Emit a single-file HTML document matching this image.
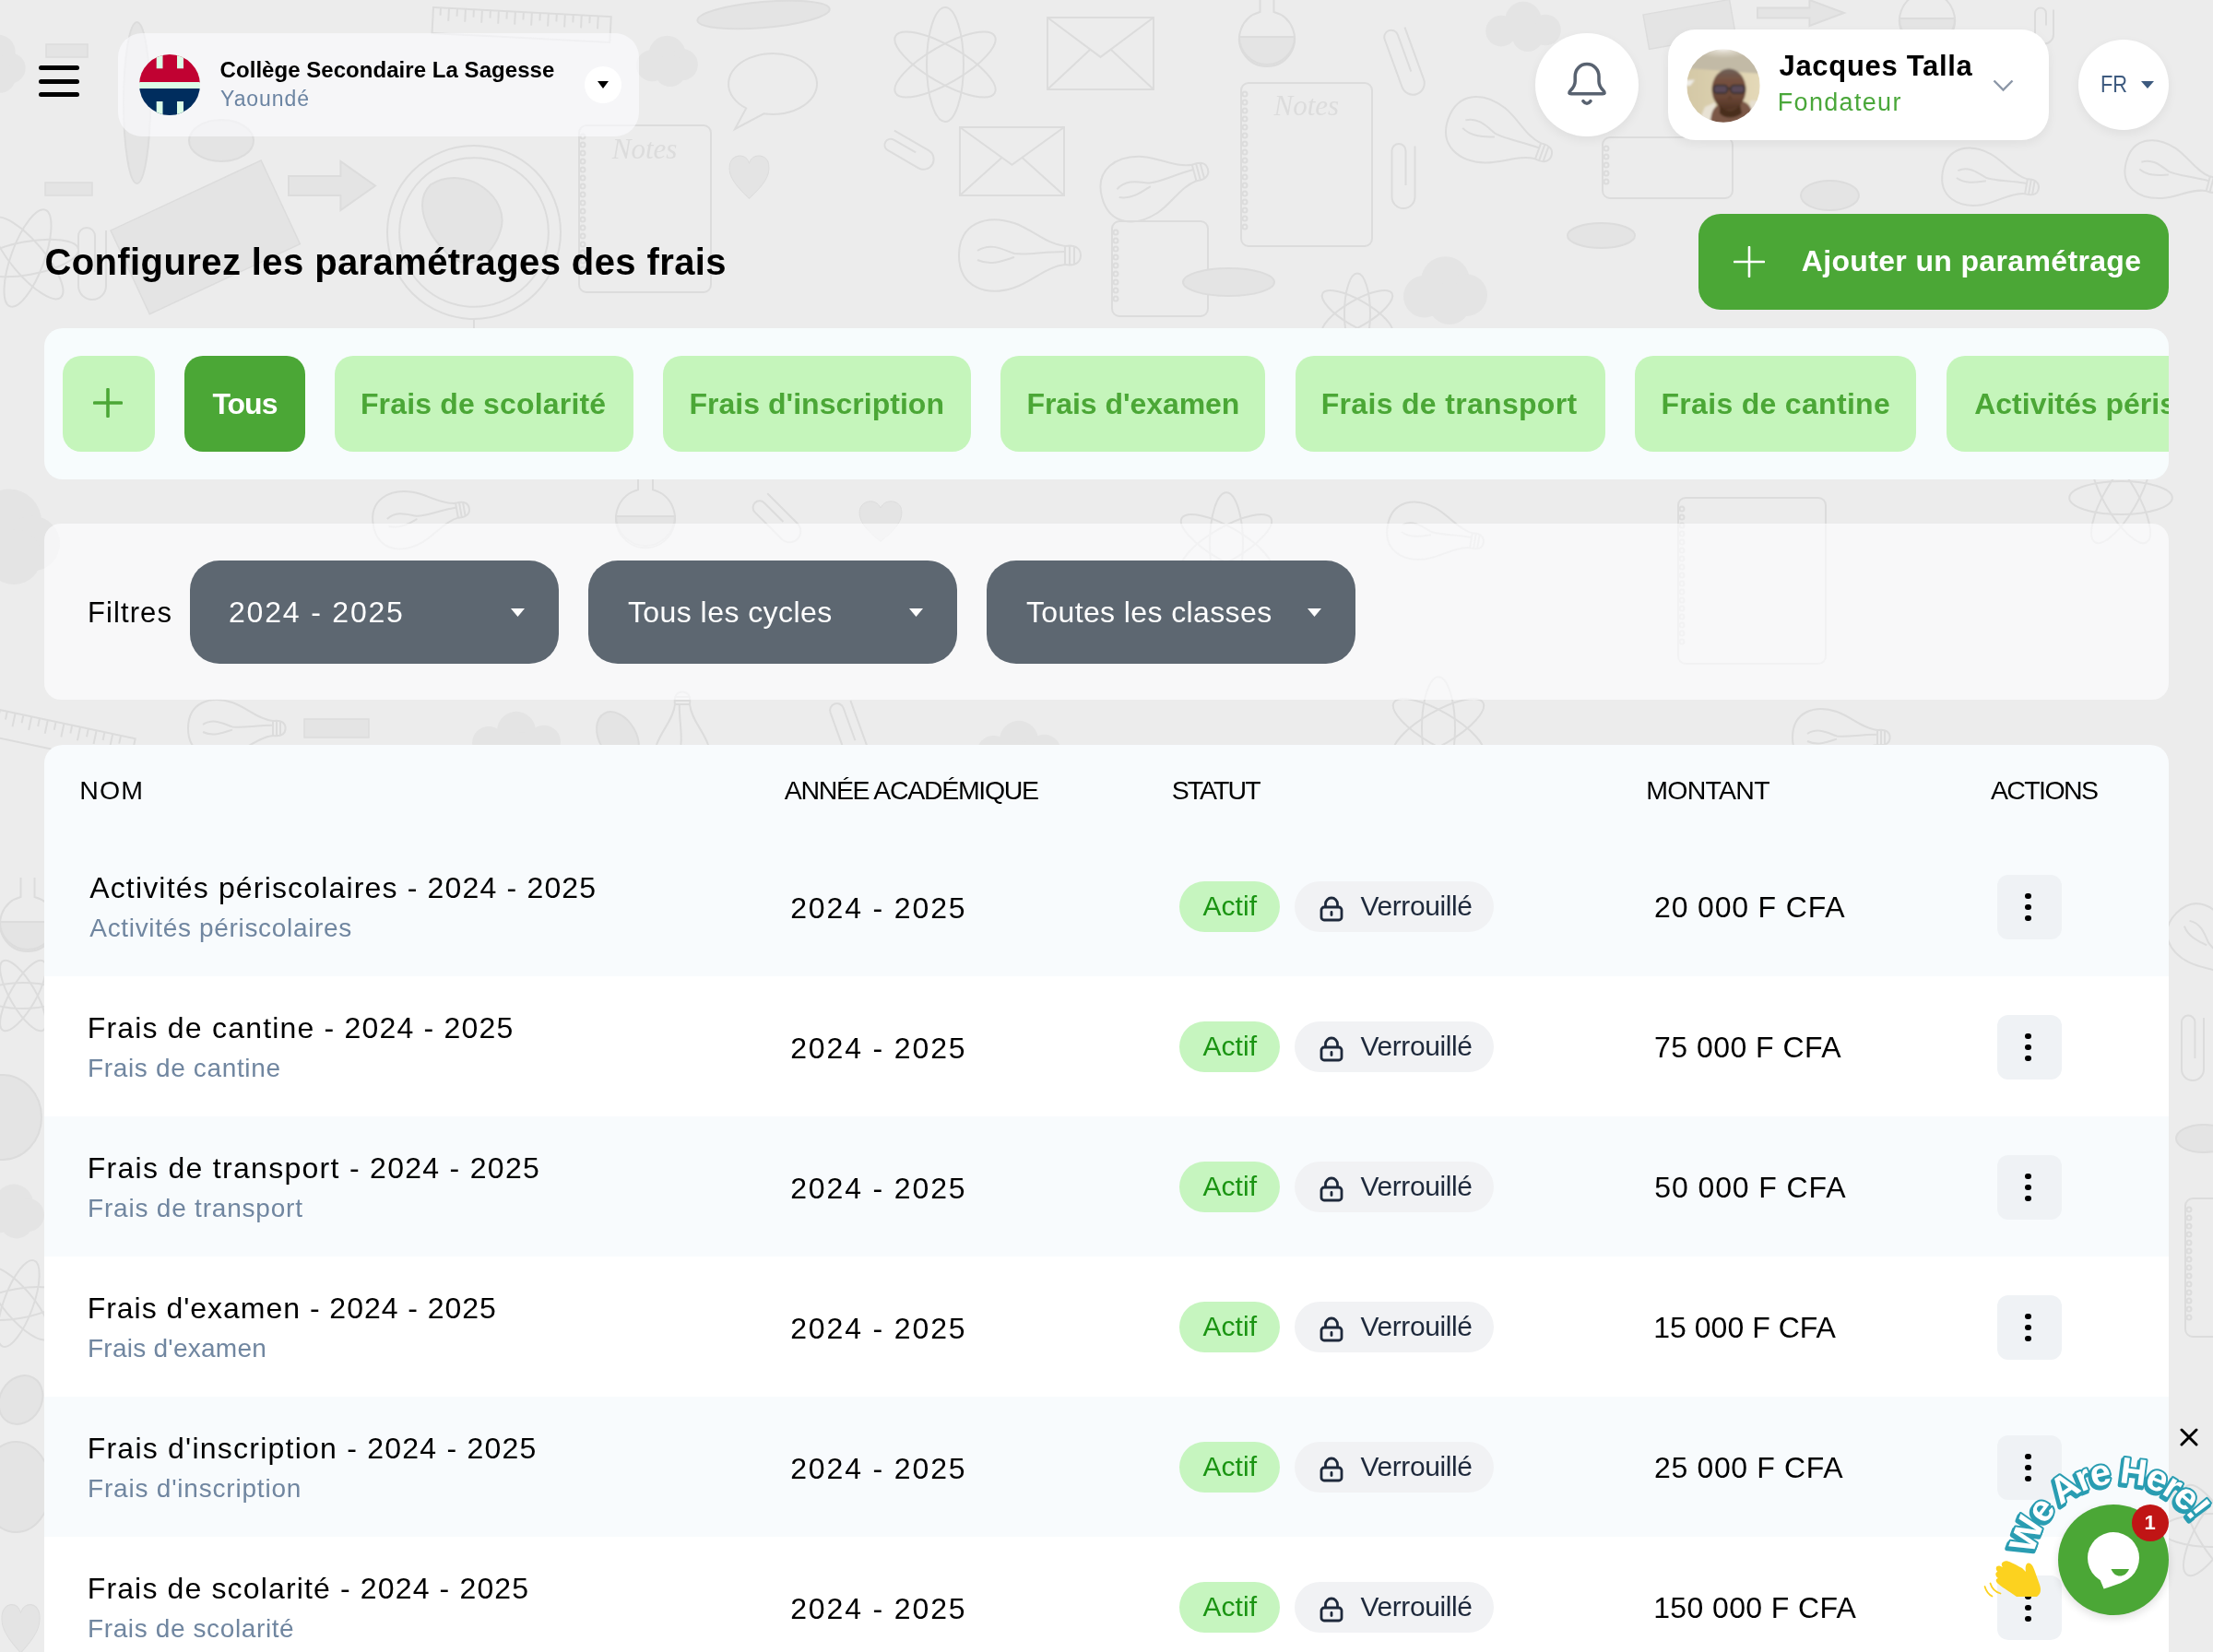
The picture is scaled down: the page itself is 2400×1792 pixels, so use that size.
<!DOCTYPE html>
<html><head><meta charset="utf-8"><style>
html,body{margin:0;padding:0;}
body{width:2400px;height:1792px;overflow:hidden;position:relative;background:#ececec;font-family:"Liberation Sans",sans-serif;}
.abs{position:absolute;}
.t{position:absolute;white-space:nowrap;line-height:1;}
#root{position:absolute;left:0;top:0;width:2400px;height:1792px;will-change:transform;}
.card1{background:rgba(251,252,255,.62);}
.card2{background:rgba(253,253,255,.66);}
.shadow{box-shadow:0 4px 12px rgba(0,0,0,.06);}
</style></head><body><div id="root">
<svg class="abs" style="left:0;top:0;filter:blur(0.6px)" width="2400" height="1792" viewBox="0 0 2400 1792"><g fill="none" stroke="#dcdcdc" stroke-width="2"><circle cx="514" cy="252" r="94"/><circle cx="514" cy="252" r="80.84"/><path d="M467.0 200.3 C504.6 176.8 556.3 214.4 542.2 252 C532.8 280.2 504.6 299.0 481.1 270.8 C462.3 252 448.2 219.1 467.0 200.3Z" fill="#e4e4e4"/><path d="M514 346 V360.1 M476.4 360.1 H551.6"/></g><g fill="none" stroke="#dcdcdc" stroke-width="2"><rect x="628" y="136" width="143" height="181" rx="8"/><circle cx="632" cy="148" r="2.5"/><circle cx="632" cy="157" r="2.5"/><circle cx="632" cy="166" r="2.5"/><circle cx="632" cy="175" r="2.5"/><circle cx="632" cy="184" r="2.5"/><circle cx="632" cy="193" r="2.5"/><circle cx="632" cy="202" r="2.5"/><circle cx="632" cy="211" r="2.5"/><circle cx="632" cy="220" r="2.5"/><circle cx="632" cy="229" r="2.5"/><circle cx="632" cy="238" r="2.5"/><circle cx="632" cy="247" r="2.5"/><circle cx="632" cy="256" r="2.5"/><circle cx="632" cy="265" r="2.5"/><circle cx="632" cy="274" r="2.5"/><circle cx="632" cy="283" r="2.5"/><circle cx="632" cy="292" r="2.5"/><text x="663.75" y="172.2" font-family="Liberation Serif" font-style="italic" font-size="31" fill="#dcdcdc" stroke="none">Notes</text></g><path transform="translate(789,165) scale(0.470,0.530)" d="M50 95 C20 70 0 50 5 25 C10 5 40 0 50 22 C60 0 92 5 95 25 C100 50 80 70 50 95Z" fill="#e4e4e4" stroke="#dcdcdc" stroke-width="2"/><g fill="none" stroke="#dcdcdc" stroke-width="2"><path d="M809.2 117.4 A48 33 0 1 1 828.4 123.34 L797 140 Z"/></g><g transform="rotate(3,470,8)" fill="none" stroke="#dcdcdc" stroke-width="2"><rect x="470" y="8" width="193" height="28"/><path d="M478 8 V16.4 M487 8 V22.0 M496 8 V16.4 M505 8 V22.0 M514 8 V16.4 M523 8 V22.0 M532 8 V16.4 M541 8 V22.0 M550 8 V16.4 M559 8 V22.0 M568 8 V16.4 M577 8 V22.0 M586 8 V16.4 M595 8 V22.0 M604 8 V16.4 M613 8 V22.0 M622 8 V16.4 M631 8 V22.0 M640 8 V16.4 M649 8 V22.0 "/></g><path d="M313 190.9 H369.4 V175 L407 201.5 L369.4 228 V212.1 H313Z" fill="#e4e4e4" stroke="#dcdcdc" stroke-width="2"/><ellipse transform="rotate(0,148.5,111.5)" cx="148.5" cy="111.5" rx="14.5" ry="87.5" fill="#e4e4e4" stroke="#dcdcdc" stroke-width="2"/><g fill="#e4e4e4" stroke="none"><circle cx="-16.2" cy="75.6" r="16.5"/><circle cx="-2.5" cy="56.7" r="19.2"/><circle cx="11.2" cy="73.9" r="16.5"/><circle cx="0.2" cy="84.2" r="16.5"/></g><g transform="translate(30,280) rotate(20)" fill="none" stroke="#dcdcdc" stroke-width="2"><ellipse cx="0" cy="0" rx="55.8" ry="18.0" transform="rotate(90)"/><ellipse cx="0" cy="0" rx="55.8" ry="18.0" transform="rotate(30)"/><ellipse cx="0" cy="0" rx="55.8" ry="18.0" transform="rotate(-30)"/></g><rect transform="rotate(-25,120,250)" x="120" y="250" width="180" height="100" fill="#e4e4e4" stroke="#dcdcdc" stroke-width="1.5"/><path transform="translate(100,280) rotate(90)" d="M-30.0 -15.0 H30.0 A15.0 15.0 0 0 1 30.0 15.0 H-24.0 A9.0 9.0 0 0 1 -24.0 -3.0 H15.0" fill="none" stroke="#dcdcdc" stroke-width="2"/><g fill="#e4e4e4" stroke="none"><circle cx="707.2" cy="71.2" r="17.1"/><circle cx="723.5" cy="58.7" r="19.9"/><circle cx="739.8" cy="70.1" r="17.1"/><circle cx="726.8" cy="76.9" r="17.1"/></g><ellipse transform="rotate(-5,828.0,16.0)" cx="828.0" cy="16.0" rx="72.0" ry="14.0" fill="#e4e4e4" stroke="#dcdcdc" stroke-width="2"/><ellipse transform="rotate(0,240.0,152.5)" cx="240.0" cy="152.5" rx="35.0" ry="22.5" fill="#e4e4e4" stroke="#dcdcdc" stroke-width="2"/><rect transform="rotate(0,49,198)" x="49" y="198" width="51" height="14" fill="#e4e4e4" stroke="#dcdcdc" stroke-width="1.5"/><rect transform="rotate(0,50,48)" x="50" y="48" width="45" height="14" fill="#e4e4e4" stroke="#dcdcdc" stroke-width="1.5"/><g transform="translate(1025,70) rotate(0)" fill="none" stroke="#dcdcdc" stroke-width="2"><ellipse cx="0" cy="0" rx="62.0" ry="20.0" transform="rotate(90)"/><ellipse cx="0" cy="0" rx="62.0" ry="20.0" transform="rotate(30)"/><ellipse cx="0" cy="0" rx="62.0" ry="20.0" transform="rotate(-30)"/></g><g fill="none" stroke="#dcdcdc" stroke-width="2"><rect x="1136" y="19" width="115" height="78"/><path d="M1136 19 L1193.5 61.900000000000006 L1251 19 M1136 97 L1182.0 54.1 M1251 97 L1205.0 54.1"/></g><g fill="none" stroke="#dcdcdc" stroke-width="2"><rect x="1041" y="138" width="113" height="74"/><path d="M1041 138 L1097.5 178.7 L1154 138 M1041 212 L1086.2 171.3 M1154 212 L1108.8 171.3"/></g><path transform="translate(983,162) rotate(30)" d="M-21.5 -11.0 H21.5 A11.0 11.0 0 0 1 21.5 11.0 H-17.1 A6.6 6.6 0 0 1 -17.1 -2.2 H10.5" fill="none" stroke="#dcdcdc" stroke-width="2"/><g transform="translate(1110,277) rotate(0) scale(1.0)" fill="none" stroke="#dcdcdc" stroke-width="2.00"><path d="M-70 0 C-70 -35 -40 -45 -10 -35 C10 -28 25 -12 45 -10 L45 10 C25 12 10 28 -10 35 C-40 45 -70 35 -70 0Z"/><path d="M45 -10 C58 -12 62 -6 62 0 C62 6 58 12 45 10 M50 -11 V11 M55 -10 V10"/><path d="M-50 -5 C-35 -15 -20 -5 -10 -2 C5 0 20 -4 45 -4 M-50 5 C-35 12 -20 5 -10 2"/></g><g transform="translate(1256,198) rotate(-15) scale(0.9)" fill="none" stroke="#dcdcdc" stroke-width="2.22"><path d="M-70 0 C-70 -35 -40 -45 -10 -35 C10 -28 25 -12 45 -10 L45 10 C25 12 10 28 -10 35 C-40 45 -70 35 -70 0Z"/><path d="M45 -10 C58 -12 62 -6 62 0 C62 6 58 12 45 10 M50 -11 V11 M55 -10 V10"/><path d="M-50 -5 C-35 -15 -20 -5 -10 -2 C5 0 20 -4 45 -4 M-50 5 C-35 12 -20 5 -10 2"/></g><g fill="none" stroke="#dcdcdc" stroke-width="2"><rect x="1346" y="90" width="142" height="177" rx="8"/><circle cx="1350" cy="102" r="2.5"/><circle cx="1350" cy="111" r="2.5"/><circle cx="1350" cy="120" r="2.5"/><circle cx="1350" cy="129" r="2.5"/><circle cx="1350" cy="138" r="2.5"/><circle cx="1350" cy="147" r="2.5"/><circle cx="1350" cy="156" r="2.5"/><circle cx="1350" cy="165" r="2.5"/><circle cx="1350" cy="174" r="2.5"/><circle cx="1350" cy="183" r="2.5"/><circle cx="1350" cy="192" r="2.5"/><circle cx="1350" cy="201" r="2.5"/><circle cx="1350" cy="210" r="2.5"/><circle cx="1350" cy="219" r="2.5"/><circle cx="1350" cy="228" r="2.5"/><circle cx="1350" cy="237" r="2.5"/><circle cx="1350" cy="246" r="2.5"/><text x="1381.5" y="125.4" font-family="Liberation Serif" font-style="italic" font-size="31" fill="#dcdcdc" stroke="none">Notes</text></g><g fill="none" stroke="#dcdcdc" stroke-width="2"><rect x="1206" y="240" width="104" height="103" rx="8"/><circle cx="1210" cy="252" r="2.5"/><circle cx="1210" cy="261" r="2.5"/><circle cx="1210" cy="270" r="2.5"/><circle cx="1210" cy="279" r="2.5"/><circle cx="1210" cy="288" r="2.5"/><circle cx="1210" cy="297" r="2.5"/><circle cx="1210" cy="306" r="2.5"/><circle cx="1210" cy="315" r="2.5"/><circle cx="1210" cy="324" r="2.5"/></g><g fill="none" stroke="#dcdcdc" stroke-width="2"><path d="M1366.5 -8.0 V13.0 A30 30 0 1 0 1381.5 13.0 V-8.0"/><path d="M1344 40 A30 30 0 0 0 1404 40Z" fill="#e4e4e4"/></g><g fill="#e4e4e4" stroke="none"><circle cx="1628.0" cy="33.6" r="16.8"/><circle cx="1652.0" cy="21.3" r="19.6"/><circle cx="1676.0" cy="32.5" r="16.8"/><circle cx="1656.8" cy="39.2" r="16.8"/></g><path transform="translate(1522,62) rotate(70)" d="M-30.0 -12.5 H30.0 A12.5 12.5 0 0 1 30.0 12.5 H-25.0 A7.5 7.5 0 0 1 -25.0 -2.5 H17.5" fill="none" stroke="#dcdcdc" stroke-width="2"/><path transform="translate(1522,186) rotate(90)" d="M-27.5 -12.5 H27.5 A12.5 12.5 0 0 1 27.5 12.5 H-22.5 A7.5 7.5 0 0 1 -22.5 -2.5 H15.0" fill="none" stroke="#dcdcdc" stroke-width="2"/><g transform="translate(1630,150) rotate(20) scale(0.9)" fill="none" stroke="#dcdcdc" stroke-width="2.22"><path d="M-70 0 C-70 -35 -40 -45 -10 -35 C10 -28 25 -12 45 -10 L45 10 C25 12 10 28 -10 35 C-40 45 -70 35 -70 0Z"/><path d="M45 -10 C58 -12 62 -6 62 0 C62 6 58 12 45 10 M50 -11 V11 M55 -10 V10"/><path d="M-50 -5 C-35 -15 -20 -5 -10 -2 C5 0 20 -4 45 -4 M-50 5 C-35 12 -20 5 -10 2"/></g><ellipse transform="rotate(0,1332.5,306.0)" cx="1332.5" cy="306.0" rx="49.5" ry="15.0" fill="#e4e4e4" stroke="#dcdcdc" stroke-width="2"/><g fill="#e4e4e4" stroke="none"><circle cx="1544.8" cy="321.6" r="22.8"/><circle cx="1567.5" cy="304.9" r="26.6"/><circle cx="1590.2" cy="320.1" r="22.8"/><circle cx="1572.0" cy="329.2" r="22.8"/></g><g transform="translate(1472,340) rotate(0)" fill="none" stroke="#dcdcdc" stroke-width="2"><ellipse cx="0" cy="0" rx="43.4" ry="14.0" transform="rotate(90)"/><ellipse cx="0" cy="0" rx="43.4" ry="14.0" transform="rotate(30)"/><ellipse cx="0" cy="0" rx="43.4" ry="14.0" transform="rotate(-30)"/></g><rect transform="rotate(-10,1782,16)" x="1782" y="16" width="95" height="38" fill="#e4e4e4" stroke="#dcdcdc" stroke-width="1.5"/><g fill="none" stroke="#dcdcdc" stroke-width="2"><rect x="1738" y="149" width="141" height="66" rx="8"/><circle cx="1742" cy="161" r="2.5"/><circle cx="1742" cy="170" r="2.5"/><circle cx="1742" cy="179" r="2.5"/><circle cx="1742" cy="188" r="2.5"/><circle cx="1742" cy="197" r="2.5"/></g><ellipse transform="rotate(0,1984.5,212.0)" cx="1984.5" cy="212.0" rx="31.5" ry="16.0" fill="#e4e4e4" stroke="#dcdcdc" stroke-width="2"/><g transform="translate(2162,196) rotate(10) scale(0.8)" fill="none" stroke="#dcdcdc" stroke-width="2.50"><path d="M-70 0 C-70 -35 -40 -45 -10 -35 C10 -28 25 -12 45 -10 L45 10 C25 12 10 28 -10 35 C-40 45 -70 35 -70 0Z"/><path d="M45 -10 C58 -12 62 -6 62 0 C62 6 58 12 45 10 M50 -11 V11 M55 -10 V10"/><path d="M-50 -5 C-35 -15 -20 -5 -10 -2 C5 0 20 -4 45 -4 M-50 5 C-35 12 -20 5 -10 2"/></g><g transform="translate(2360,190) rotate(15) scale(0.8)" fill="none" stroke="#dcdcdc" stroke-width="2.50"><path d="M-70 0 C-70 -35 -40 -45 -10 -35 C10 -28 25 -12 45 -10 L45 10 C25 12 10 28 -10 35 C-40 45 -70 35 -70 0Z"/><path d="M45 -10 C58 -12 62 -6 62 0 C62 6 58 12 45 10 M50 -11 V11 M55 -10 V10"/><path d="M-50 -5 C-35 -15 -20 -5 -10 -2 C5 0 20 -4 45 -4 M-50 5 C-35 12 -20 5 -10 2"/></g><ellipse transform="rotate(0,1736.5,255.5)" cx="1736.5" cy="255.5" rx="36.5" ry="13.5" fill="#e4e4e4" stroke="#dcdcdc" stroke-width="2"/><g fill="none" stroke="#dcdcdc" stroke-width="2"><path d="M2082.5 -28.0 V-7.0 A30 30 0 1 0 2097.5 -7.0 V-28.0"/><path d="M2060 20 A30 30 0 0 0 2120 20Z" fill="#e4e4e4"/></g><path transform="translate(2217,24) rotate(90)" d="M-13.5 -10.0 H13.5 A10.0 10.0 0 0 1 13.5 10.0 H-9.5 A6.0 6.0 0 0 1 -9.5 -2.0 H3.5" fill="none" stroke="#dcdcdc" stroke-width="2"/><path d="M1906 8.4 H1962.4 V0 L2000 14.0 L1962.4 28 V19.599999999999998 H1906Z" fill="#e4e4e4" stroke="#dcdcdc" stroke-width="2"/><g fill="#e4e4e4" stroke="none"><circle cx="-15.0" cy="592.0" r="30.0"/><circle cx="10.0" cy="565.6" r="35.0"/><circle cx="35.0" cy="589.6" r="30.0"/><circle cx="15.0" cy="604.0" r="30.0"/></g><g transform="translate(460,560) rotate(-10) scale(0.8)" fill="none" stroke="#dcdcdc" stroke-width="2.50"><path d="M-70 0 C-70 -35 -40 -45 -10 -35 C10 -28 25 -12 45 -10 L45 10 C25 12 10 28 -10 35 C-40 45 -70 35 -70 0Z"/><path d="M45 -10 C58 -12 62 -6 62 0 C62 6 58 12 45 10 M50 -11 V11 M55 -10 V10"/><path d="M-50 -5 C-35 -15 -20 -5 -10 -2 C5 0 20 -4 45 -4 M-50 5 C-35 12 -20 5 -10 2"/></g><g fill="none" stroke="#dcdcdc" stroke-width="2"><path d="M692.0 508.8 V531.2 A32 32 0 1 0 708.0 531.2 V508.8"/><path d="M668 560 A32 32 0 0 0 732 560Z" fill="#e4e4e4"/></g><path transform="translate(840,560) rotate(45)" d="M-23.0 -12.0 H23.0 A12.0 12.0 0 0 1 23.0 12.0 H-18.200000000000003 A7.199999999999999 7.199999999999999 0 0 1 -18.200000000000003 -2.4000000000000004 H11.0" fill="none" stroke="#dcdcdc" stroke-width="2"/><path transform="translate(930,540) scale(0.500,0.500)" d="M50 95 C20 70 0 50 5 25 C10 5 40 0 50 22 C60 0 92 5 95 25 C100 50 80 70 50 95Z" fill="#e4e4e4" stroke="#dcdcdc" stroke-width="2"/><g transform="translate(1330,590) rotate(0)" fill="none" stroke="#dcdcdc" stroke-width="2"><ellipse cx="0" cy="0" rx="55.8" ry="18.0" transform="rotate(90)"/><ellipse cx="0" cy="0" rx="55.8" ry="18.0" transform="rotate(30)"/><ellipse cx="0" cy="0" rx="55.8" ry="18.0" transform="rotate(-30)"/></g><g transform="translate(1560,580) rotate(10) scale(0.8)" fill="none" stroke="#dcdcdc" stroke-width="2.50"><path d="M-70 0 C-70 -35 -40 -45 -10 -35 C10 -28 25 -12 45 -10 L45 10 C25 12 10 28 -10 35 C-40 45 -70 35 -70 0Z"/><path d="M45 -10 C58 -12 62 -6 62 0 C62 6 58 12 45 10 M50 -11 V11 M55 -10 V10"/><path d="M-50 -5 C-35 -15 -20 -5 -10 -2 C5 0 20 -4 45 -4 M-50 5 C-35 12 -20 5 -10 2"/></g><g fill="none" stroke="#dcdcdc" stroke-width="2"><rect x="1820" y="540" width="160" height="180" rx="8"/><circle cx="1824" cy="552" r="2.5"/><circle cx="1824" cy="561" r="2.5"/><circle cx="1824" cy="570" r="2.5"/><circle cx="1824" cy="579" r="2.5"/><circle cx="1824" cy="588" r="2.5"/><circle cx="1824" cy="597" r="2.5"/><circle cx="1824" cy="606" r="2.5"/><circle cx="1824" cy="615" r="2.5"/><circle cx="1824" cy="624" r="2.5"/><circle cx="1824" cy="633" r="2.5"/><circle cx="1824" cy="642" r="2.5"/><circle cx="1824" cy="651" r="2.5"/><circle cx="1824" cy="660" r="2.5"/><circle cx="1824" cy="669" r="2.5"/><circle cx="1824" cy="678" r="2.5"/><circle cx="1824" cy="687" r="2.5"/><circle cx="1824" cy="696" r="2.5"/></g><g transform="translate(2300,540) rotate(30)" fill="none" stroke="#dcdcdc" stroke-width="2"><ellipse cx="0" cy="0" rx="55.8" ry="18.0" transform="rotate(90)"/><ellipse cx="0" cy="0" rx="55.8" ry="18.0" transform="rotate(30)"/><ellipse cx="0" cy="0" rx="55.8" ry="18.0" transform="rotate(-30)"/></g><g transform="rotate(12,0,770)" fill="none" stroke="#dcdcdc" stroke-width="2"><rect x="0" y="770" width="150" height="30"/><path d="M8 770 V779.0 M17 770 V785.0 M26 770 V779.0 M35 770 V785.0 M44 770 V779.0 M53 770 V785.0 M62 770 V779.0 M71 770 V785.0 M80 770 V779.0 M89 770 V785.0 M98 770 V779.0 M107 770 V785.0 M116 770 V779.0 M125 770 V785.0 M134 770 V779.0 "/></g><g transform="translate(260,790) rotate(0) scale(0.8)" fill="none" stroke="#dcdcdc" stroke-width="2.50"><path d="M-70 0 C-70 -35 -40 -45 -10 -35 C10 -28 25 -12 45 -10 L45 10 C25 12 10 28 -10 35 C-40 45 -70 35 -70 0Z"/><path d="M45 -10 C58 -12 62 -6 62 0 C62 6 58 12 45 10 M50 -11 V11 M55 -10 V10"/><path d="M-50 -5 C-35 -15 -20 -5 -10 -2 C5 0 20 -4 45 -4 M-50 5 C-35 12 -20 5 -10 2"/></g><rect transform="rotate(0,330,780)" x="330" y="780" width="70" height="20" fill="#e4e4e4" stroke="#dcdcdc" stroke-width="1.5"/><g fill="#e4e4e4" stroke="none"><circle cx="530.0" cy="806.0" r="18.0"/><circle cx="560.0" cy="792.8" r="21.0"/><circle cx="590.0" cy="804.8" r="18.0"/><circle cx="566.0" cy="812.0" r="18.0"/></g><ellipse transform="rotate(60,670.0,800.0)" cx="670.0" cy="800.0" rx="30.0" ry="20.0" fill="#e4e4e4" stroke="#dcdcdc" stroke-width="2"/><g transform="translate(740,800) rotate(-90) scale(0.8)" fill="none" stroke="#dcdcdc" stroke-width="2.50"><path d="M-70 0 C-70 -35 -40 -45 -10 -35 C10 -28 25 -12 45 -10 L45 10 C25 12 10 28 -10 35 C-40 45 -70 35 -70 0Z"/><path d="M45 -10 C58 -12 62 -6 62 0 C62 6 58 12 45 10 M50 -11 V11 M55 -10 V10"/><path d="M-50 -5 C-35 -15 -20 -5 -10 -2 C5 0 20 -4 45 -4 M-50 5 C-35 12 -20 5 -10 2"/></g><path transform="translate(920,790) rotate(70)" d="M-27.5 -12.5 H27.5 A12.5 12.5 0 0 1 27.5 12.5 H-22.5 A7.5 7.5 0 0 1 -22.5 -2.5 H15.0" fill="none" stroke="#dcdcdc" stroke-width="2"/><g fill="#e4e4e4" stroke="none"><circle cx="1077.5" cy="816.0" r="18.0"/><circle cx="1105.0" cy="802.8" r="21.0"/><circle cx="1132.5" cy="814.8" r="18.0"/><circle cx="1110.5" cy="822.0" r="18.0"/></g><g transform="translate(1560,790) rotate(0)" fill="none" stroke="#dcdcdc" stroke-width="2"><ellipse cx="0" cy="0" rx="55.8" ry="18.0" transform="rotate(90)"/><ellipse cx="0" cy="0" rx="55.8" ry="18.0" transform="rotate(30)"/><ellipse cx="0" cy="0" rx="55.8" ry="18.0" transform="rotate(-30)"/></g><g transform="translate(2000,800) rotate(0) scale(0.8)" fill="none" stroke="#dcdcdc" stroke-width="2.50"><path d="M-70 0 C-70 -35 -40 -45 -10 -35 C10 -28 25 -12 45 -10 L45 10 C25 12 10 28 -10 35 C-40 45 -70 35 -70 0Z"/><path d="M45 -10 C58 -12 62 -6 62 0 C62 6 58 12 45 10 M50 -11 V11 M55 -10 V10"/><path d="M-50 -5 C-35 -15 -20 -5 -10 -2 C5 0 20 -4 45 -4 M-50 5 C-35 12 -20 5 -10 2"/></g><g fill="none" stroke="#dcdcdc" stroke-width="2"><path d="M22.5 952.0 V973.0 A30 30 0 1 0 37.5 973.0 V952.0"/><path d="M0 1000 A30 30 0 0 0 60 1000Z" fill="#e4e4e4"/></g><g transform="translate(25,1080) rotate(30)" fill="none" stroke="#dcdcdc" stroke-width="2"><ellipse cx="0" cy="0" rx="43.4" ry="14.0" transform="rotate(90)"/><ellipse cx="0" cy="0" rx="43.4" ry="14.0" transform="rotate(30)"/><ellipse cx="0" cy="0" rx="43.4" ry="14.0" transform="rotate(-30)"/></g><ellipse transform="rotate(0,2.5,1212.0)" cx="2.5" cy="1212.0" rx="42.5" ry="46.0" fill="#e4e4e4" stroke="#dcdcdc" stroke-width="2"/><g fill="#e4e4e4" stroke="none"><circle cx="0.0" cy="1319.2" r="18.0"/><circle cx="15.0" cy="1305.6" r="21.0"/><circle cx="30.0" cy="1318.0" r="18.0"/><circle cx="18.0" cy="1325.4" r="18.0"/></g><g transform="translate(20,1414) rotate(20)" fill="none" stroke="#dcdcdc" stroke-width="2"><ellipse cx="0" cy="0" rx="49.6" ry="16.0" transform="rotate(90)"/><ellipse cx="0" cy="0" rx="49.6" ry="16.0" transform="rotate(30)"/><ellipse cx="0" cy="0" rx="49.6" ry="16.0" transform="rotate(-30)"/></g><ellipse transform="rotate(30,22.5,1518.5)" cx="22.5" cy="1518.5" rx="22.5" ry="27.5" fill="#e4e4e4" stroke="#dcdcdc" stroke-width="2"/><ellipse transform="rotate(0,17.5,1613.0)" cx="17.5" cy="1613.0" rx="37.5" ry="49.0" fill="#e4e4e4" stroke="#dcdcdc" stroke-width="2"/><path transform="translate(0,1736) scale(0.450,0.600)" d="M50 95 C20 70 0 50 5 25 C10 5 40 0 50 22 C60 0 92 5 95 25 C100 50 80 70 50 95Z" fill="#e4e4e4" stroke="#dcdcdc" stroke-width="2"/><path transform="translate(2378,1132) rotate(90)" d="M-28.0 -12.0 H28.0 A12.0 12.0 0 0 1 28.0 12.0 H-23.200000000000003 A7.199999999999999 7.199999999999999 0 0 1 -23.200000000000003 -2.4000000000000004 H16.0" fill="none" stroke="#dcdcdc" stroke-width="2"/><g transform="translate(2400,1030) rotate(45) scale(0.8)" fill="none" stroke="#dcdcdc" stroke-width="2.50"><path d="M-70 0 C-70 -35 -40 -45 -10 -35 C10 -28 25 -12 45 -10 L45 10 C25 12 10 28 -10 35 C-40 45 -70 35 -70 0Z"/><path d="M45 -10 C58 -12 62 -6 62 0 C62 6 58 12 45 10 M50 -11 V11 M55 -10 V10"/><path d="M-50 -5 C-35 -15 -20 -5 -10 -2 C5 0 20 -4 45 -4 M-50 5 C-35 12 -20 5 -10 2"/></g><ellipse transform="rotate(0,2390.0,1235.0)" cx="2390.0" cy="1235.0" rx="30.0" ry="15.0" fill="#e4e4e4" stroke="#dcdcdc" stroke-width="2"/><g transform="translate(2400,1660) rotate(90)" fill="none" stroke="#dcdcdc" stroke-width="2"><ellipse cx="0" cy="0" rx="55.8" ry="18.0" transform="rotate(90)"/><ellipse cx="0" cy="0" rx="55.8" ry="18.0" transform="rotate(30)"/><ellipse cx="0" cy="0" rx="55.8" ry="18.0" transform="rotate(-30)"/></g><g fill="none" stroke="#dcdcdc" stroke-width="2"><rect x="2370" y="1300" width="110" height="150" rx="8"/><circle cx="2374" cy="1312" r="2.5"/><circle cx="2374" cy="1321" r="2.5"/><circle cx="2374" cy="1330" r="2.5"/><circle cx="2374" cy="1339" r="2.5"/><circle cx="2374" cy="1348" r="2.5"/><circle cx="2374" cy="1357" r="2.5"/><circle cx="2374" cy="1366" r="2.5"/><circle cx="2374" cy="1375" r="2.5"/><circle cx="2374" cy="1384" r="2.5"/><circle cx="2374" cy="1393" r="2.5"/><circle cx="2374" cy="1402" r="2.5"/><circle cx="2374" cy="1411" r="2.5"/><circle cx="2374" cy="1420" r="2.5"/><circle cx="2374" cy="1429" r="2.5"/></g></svg>
<div class="abs" style="left:42px;top:71px;width:44px;height:5px;border-radius:3px;background:#000"></div>
<div class="abs" style="left:42px;top:85.5px;width:44px;height:5px;border-radius:3px;background:#000"></div>
<div class="abs" style="left:42px;top:100px;width:44px;height:5px;border-radius:3px;background:#000"></div>
<div class="abs card1" style="left:128px;top:36px;width:565px;height:112px;border-radius:26px;"></div>
<svg class="abs" style="left:151px;top:59px" width="66" height="66" viewBox="0 0 66 66">
<defs><clipPath id="lc"><circle cx="33" cy="33" r="33"/></clipPath></defs>
<g clip-path="url(#lc)">
<rect x="0" y="0" width="66" height="31" fill="#c10232"/>
<rect x="0" y="30" width="66" height="7" fill="#dcfce7"/>
<rect x="0" y="37" width="66" height="30" fill="#002d5e"/>
<rect x="18.7" y="0" width="6.8" height="15.3" fill="#dcfce7"/>
<rect x="41" y="0" width="7" height="15.3" fill="#dcfce7"/>
<rect x="18.7" y="51" width="6.8" height="16" fill="#dcfce7"/>
<rect x="41" y="51" width="7" height="16" fill="#dcfce7"/>
</g></svg>
<div class="t" style="left:238.60px;top:63.68px;font-size:24px;color:#000;font-weight:700;letter-spacing:0.043px;">Collège Secondaire La Sagesse</div>
<div class="t" style="left:239.10px;top:95.93px;font-size:23px;color:#6b84a2;letter-spacing:0.917px;">Yaoundé</div>
<div class="abs" style="left:634px;top:72px;width:40px;height:40px;border-radius:50%;background:#fff"></div>
<svg class="abs" style="left:648px;top:87.8px" width="12" height="8" viewBox="0 0 12 8"><path d="M0 0H12L6 8Z" fill="#000"/></svg>
<div class="abs shadow" style="left:1665px;top:36px;width:112px;height:112px;border-radius:50%;background:#fff"></div>
<svg class="abs" style="left:1698px;top:66px" width="46" height="50" viewBox="0 0 46 50">
<path d="M10.2 22.3 V17 C10.2 9.5 15.5 3.6 23 3.6 C30.5 3.6 36 9.5 36 17 V22.3 C36 27 38 29.5 41 32.5 C43 34.5 42.5 35.8 40 35.8 H6 C3.5 35.8 3 34.5 5 32.5 C8 29.5 10.2 27 10.2 22.3 Z" fill="none" stroke="#586270" stroke-width="3.5" stroke-linejoin="round"/>
<path d="M18.9 43.6 Q23 48.8 27 43.6" fill="none" stroke="#586270" stroke-width="3.5" stroke-linecap="round"/>
</svg>
<div class="abs shadow" style="left:1809px;top:32px;width:413px;height:120px;border-radius:30px;background:#fff"></div>
<svg class="abs" style="left:1829px;top:52.6px" width="80" height="80" viewBox="0 0 80 80">
<defs><clipPath id="ac"><circle cx="40" cy="40" r="39.8"/></clipPath>
<filter id="bl" x="-10%" y="-10%" width="120%" height="120%"><feGaussianBlur stdDeviation="0.9"/></filter>
<radialGradient id="ag" cx="0.5" cy="0.02" r="0.4"><stop offset="0" stop-color="#ffffff"/><stop offset="0.45" stop-color="#dcd6c8"/><stop offset="1" stop-color="#c2baa6"/></radialGradient>
<linearGradient id="wall" x1="0" y1="0" x2="1" y2="0"><stop offset="0" stop-color="#d4c8a6"/><stop offset="1" stop-color="#e4d9b8"/></linearGradient>
<linearGradient id="face" x1="0" y1="0" x2="0" y2="1"><stop offset="0" stop-color="#6d6058"/><stop offset="0.3" stop-color="#76503f"/><stop offset="0.7" stop-color="#6a4636"/><stop offset="1" stop-color="#4e3121"/></linearGradient></defs>
<g clip-path="url(#ac)"><g filter="url(#bl)">
<rect width="80" height="80" fill="url(#wall)"/>
<path d="M-2 -2 H82 V27 L62 25.5 L8 21.5 L-2 22 Z" fill="url(#ag)"/>
<path d="M0 34 L9 33.5 L4 40 L0 40Z" fill="#eeece6"/>
<path d="M12 82 L20 63 L31 58 L33 82 Z" fill="#e8e2d4"/>
<path d="M69 56 L80 56 L80 82 L67 82Z" fill="#e6dfd0"/>
<path d="M26 82 C26 68 30 62 37 60 L61 57 C69 59 73 68 73 82 Z" fill="#7b5846"/>
<ellipse cx="46" cy="44" rx="18.5" ry="22.5" fill="url(#face)"/>
<path d="M36 61 C42 69 52 69 58 60 L60 70 C52 76 42 76 36 70Z" fill="#4a2e1f"/>
<rect x="29.5" y="39.5" width="15" height="8.5" rx="3.5" fill="#5a4a58" stroke="#35302f" stroke-width="1.6"/>
<rect x="48" y="39.5" width="15" height="8.5" rx="3.5" fill="#5a4a58" stroke="#35302f" stroke-width="1.6"/>
<path d="M44.5 43 H48" stroke="#35302f" stroke-width="1.6"/>
<path d="M47 50 L44 55 H50Z" fill="#5e3c2c"/>
</g></g></svg>
<div class="t" style="left:1929.50px;top:56.46px;font-size:31px;color:#000;font-weight:700;letter-spacing:0.683px;">Jacques Talla</div>
<div class="t" style="left:1927.80px;top:97.84px;font-size:27px;color:#4aa73a;letter-spacing:1.312px;">Fondateur</div>
<svg class="abs" style="left:2161px;top:86px" width="23" height="14" viewBox="0 0 23 14"><path d="M1.5 1.5L11.5 11.5L21.5 1.5" fill="none" stroke="#8c97a7" stroke-width="2.4"/></svg>
<div class="abs shadow" style="left:2254px;top:43px;width:98px;height:98px;border-radius:50%;background:#fff"></div>
<div class="t" style="left:2277.90px;top:78.49px;font-size:26px;color:#3d5a7f;letter-spacing:0.000px;transform:scaleX(0.84);transform-origin:0 0;">FR</div>
<svg class="abs" style="left:2322px;top:88px" width="14" height="8" viewBox="0 0 14 8"><path d="M0 0H14L7 8Z" fill="#3d5a7f"/></svg>
<div class="t" style="left:48.40px;top:264.34px;font-size:40px;color:#000;font-weight:700;letter-spacing:0.403px;">Configurez les paramétrages des frais</div>
<div class="abs" style="left:1842px;top:232px;width:510px;height:104px;border-radius:24px;background:#4ba736"></div>
<svg class="abs" style="left:1880px;top:267px" width="34" height="34" viewBox="0 0 34 34"><path d="M17 1V33M1 17H33" stroke="#fff" stroke-width="2.6" stroke-linecap="round"/></svg>
<div class="t" style="left:1953.70px;top:267.31px;font-size:32px;color:#fff;font-weight:700;letter-spacing:0.352px;">Ajouter un paramétrage</div>
<div class="abs" style="left:48px;top:356px;width:2304px;height:164px;border-radius:20px;background:#f7fcfd;overflow:hidden">
<div class="abs" style="left:20px;top:30px;width:100px;height:104px;border-radius:20px;background:#c5f5bb"></div>
<svg class="abs" style="left:53px;top:65px" width="32" height="32" viewBox="0 0 32 32"><path d="M16 1.5V30.5M1.5 16H30.5" stroke="#4ba736" stroke-width="3.6" stroke-linecap="round"/></svg>
<div class="abs" style="left:152px;top:30px;width:131px;height:104px;border-radius:20px;background:#4ba736"></div><div class="t" style="left:182.40px;top:66.11px;font-size:32px;color:#fff;font-weight:700;letter-spacing:-1.000px;">Tous</div>
<div class="abs" style="left:315px;top:30px;width:324px;height:104px;border-radius:20px;background:#c5f5bb"></div><div class="t" style="left:342.90px;top:66.11px;font-size:32px;color:#4ba736;font-weight:700;letter-spacing:0.176px;">Frais de scolarité</div>
<div class="abs" style="left:671px;top:30px;width:334px;height:104px;border-radius:20px;background:#c5f5bb"></div><div class="t" style="left:699.40px;top:66.11px;font-size:32px;color:#4ba736;font-weight:700;letter-spacing:0.028px;">Frais d'inscription</div>
<div class="abs" style="left:1037px;top:30px;width:287px;height:104px;border-radius:20px;background:#c5f5bb"></div><div class="t" style="left:1065.40px;top:66.11px;font-size:32px;color:#4ba736;font-weight:700;letter-spacing:-0.054px;">Frais d'examen</div>
<div class="abs" style="left:1357px;top:30px;width:336px;height:104px;border-radius:20px;background:#c5f5bb"></div><div class="t" style="left:1384.70px;top:66.11px;font-size:32px;color:#4ba736;font-weight:700;letter-spacing:0.318px;">Frais de transport</div>
<div class="abs" style="left:1725px;top:30px;width:305px;height:104px;border-radius:20px;background:#c5f5bb"></div><div class="t" style="left:1753.50px;top:66.11px;font-size:32px;color:#4ba736;font-weight:700;letter-spacing:0.307px;">Frais de cantine</div>
<div class="abs" style="left:2063px;top:30px;width:389px;height:104px;border-radius:20px;background:#c5f5bb"></div><div class="t" style="left:2093.20px;top:66.11px;font-size:32px;color:#4ba736;font-weight:700;letter-spacing:0.000px;">Activités périscolaires</div>
</div>
<div class="abs card2" style="left:48px;top:568px;width:2304px;height:191px;border-radius:18px;"></div>
<div class="t" style="left:94.90px;top:648.76px;font-size:31px;color:#000;letter-spacing:1.117px;">Filtres</div>
<div class="abs" style="left:206px;top:608px;width:400px;height:112px;border-radius:32px;background:#5d6771"></div><div class="t" style="left:248.00px;top:647.91px;font-size:32px;color:#fff;letter-spacing:1.810px;">2024 - 2025</div><svg class="abs" style="left:554px;top:660px" width="15" height="9" viewBox="0 0 15 9"><path d="M0 0H15L7.5 9Z" fill="#fff"/></svg>
<div class="abs" style="left:638px;top:608px;width:400px;height:112px;border-radius:32px;background:#5d6771"></div><div class="t" style="left:680.90px;top:647.91px;font-size:32px;color:#fff;letter-spacing:0.443px;">Tous les cycles</div><svg class="abs" style="left:986px;top:660px" width="15" height="9" viewBox="0 0 15 9"><path d="M0 0H15L7.5 9Z" fill="#fff"/></svg>
<div class="abs" style="left:1070px;top:608px;width:400px;height:112px;border-radius:32px;background:#5d6771"></div><div class="t" style="left:1112.90px;top:647.91px;font-size:32px;color:#fff;letter-spacing:0.388px;">Toutes les classes</div><svg class="abs" style="left:1418px;top:660px" width="15" height="9" viewBox="0 0 15 9"><path d="M0 0H15L7.5 9Z" fill="#fff"/></svg>
<div class="abs" style="left:48px;top:808px;width:2304px;height:1100px;border-radius:20px;background:#f8fbfd;overflow:hidden">
<div class="t" style="left:38.30px;top:35.27px;font-size:28.5px;color:#000;letter-spacing:1.050px;">NOM</div>
<div class="t" style="left:802.70px;top:35.27px;font-size:28.5px;color:#000;letter-spacing:-1.320px;">ANNÉE ACADÉMIQUE</div>
<div class="t" style="left:1222.70px;top:35.27px;font-size:28.5px;color:#000;letter-spacing:-1.940px;">STATUT</div>
<div class="t" style="left:1737.20px;top:35.27px;font-size:28.5px;color:#000;letter-spacing:-0.733px;">MONTANT</div>
<div class="t" style="left:2110.90px;top:35.27px;font-size:28.5px;color:#000;letter-spacing:-1.600px;">ACTIONS</div>
<div class="abs" style="left:0;top:99px;width:2304px;height:152px;background:#f8fbfd"></div>
<div class="t" style="left:49.20px;top:139.41px;font-size:32px;color:#000;letter-spacing:1.167px;">Activités périscolaires - 2024 - 2025</div>
<div class="t" style="left:49.30px;top:185.30px;font-size:28px;color:#7086a0;letter-spacing:0.673px;">Activités périscolaires</div>
<div class="t" style="left:809.20px;top:160.51px;font-size:32px;color:#000;letter-spacing:1.860px;">2024 - 2025</div>
<div class="abs" style="left:1231.3px;top:147.79999999999995px;width:108.4px;height:55.7px;border-radius:28px;background:#c6f5bf"></div>
<div class="t" style="left:1256.50px;top:160.40px;font-size:30px;color:#1a9412;letter-spacing:0.050px;">Actif</div>
<div class="abs" style="left:1356px;top:147.79999999999995px;width:215.8px;height:55.7px;border-radius:28px;background:#f1f2f4"></div>
<svg class="abs" style="left:1383px;top:164px" width="27" height="28" viewBox="0 0 27 28"><rect x="2" y="12" width="22" height="14" rx="3" fill="none" stroke="#1e293b" stroke-width="2.8"/><path d="M6.5 12V8.5a6.5 6.5 0 0 1 13 0V12" fill="none" stroke="#1e293b" stroke-width="2.8"/><path d="M13 17.5V20.5" stroke="#1e293b" stroke-width="2.8" stroke-linecap="round"/></svg>
<div class="t" style="left:1427.50px;top:160.40px;font-size:30px;color:#1e293b;letter-spacing:-0.411px;">Verrouillé</div>
<div class="t" style="left:1746.00px;top:160.31px;font-size:32px;color:#000;letter-spacing:0.836px;">20 000 F CFA</div>
<div class="abs" style="left:2118.3px;top:141px;width:69.4px;height:69.5px;border-radius:12px;background:#eff2f5"></div>
<div class="abs" style="left:2148.4px;top:161.0999999999999px;width:6.4px;height:6.4px;border-radius:50%;background:#000"></div>
<div class="abs" style="left:2148.4px;top:172.79999999999995px;width:6.4px;height:6.4px;border-radius:50%;background:#000"></div>
<div class="abs" style="left:2148.4px;top:184.5px;width:6.4px;height:6.4px;border-radius:50%;background:#000"></div>
<div class="abs" style="left:0;top:251px;width:2304px;height:152px;background:#ffffff"></div>
<div class="t" style="left:46.70px;top:291.41px;font-size:32px;color:#000;letter-spacing:1.197px;">Frais de cantine - 2024 - 2025</div>
<div class="t" style="left:47.00px;top:337.30px;font-size:28px;color:#7086a0;letter-spacing:0.653px;">Frais de cantine</div>
<div class="t" style="left:809.20px;top:312.51px;font-size:32px;color:#000;letter-spacing:1.860px;">2024 - 2025</div>
<div class="abs" style="left:1231.3px;top:299.79999999999995px;width:108.4px;height:55.7px;border-radius:28px;background:#c6f5bf"></div>
<div class="t" style="left:1256.50px;top:312.40px;font-size:30px;color:#1a9412;letter-spacing:0.050px;">Actif</div>
<div class="abs" style="left:1356px;top:299.79999999999995px;width:215.8px;height:55.7px;border-radius:28px;background:#f1f2f4"></div>
<svg class="abs" style="left:1383px;top:316px" width="27" height="28" viewBox="0 0 27 28"><rect x="2" y="12" width="22" height="14" rx="3" fill="none" stroke="#1e293b" stroke-width="2.8"/><path d="M6.5 12V8.5a6.5 6.5 0 0 1 13 0V12" fill="none" stroke="#1e293b" stroke-width="2.8"/><path d="M13 17.5V20.5" stroke="#1e293b" stroke-width="2.8" stroke-linecap="round"/></svg>
<div class="t" style="left:1427.50px;top:312.40px;font-size:30px;color:#1e293b;letter-spacing:-0.411px;">Verrouillé</div>
<div class="t" style="left:1746.00px;top:312.31px;font-size:32px;color:#000;letter-spacing:0.473px;">75 000 F CFA</div>
<div class="abs" style="left:2118.3px;top:293px;width:69.4px;height:69.5px;border-radius:12px;background:#eff2f5"></div>
<div class="abs" style="left:2148.4px;top:313.0999999999999px;width:6.4px;height:6.4px;border-radius:50%;background:#000"></div>
<div class="abs" style="left:2148.4px;top:324.79999999999995px;width:6.4px;height:6.4px;border-radius:50%;background:#000"></div>
<div class="abs" style="left:2148.4px;top:336.5px;width:6.4px;height:6.4px;border-radius:50%;background:#000"></div>
<div class="abs" style="left:0;top:403px;width:2304px;height:152px;background:#f8fbfd"></div>
<div class="t" style="left:46.70px;top:443.41px;font-size:32px;color:#000;letter-spacing:1.294px;">Frais de transport - 2024 - 2025</div>
<div class="t" style="left:47.00px;top:489.30px;font-size:28px;color:#7086a0;letter-spacing:0.800px;">Frais de transport</div>
<div class="t" style="left:809.20px;top:464.51px;font-size:32px;color:#000;letter-spacing:1.860px;">2024 - 2025</div>
<div class="abs" style="left:1231.3px;top:451.79999999999995px;width:108.4px;height:55.7px;border-radius:28px;background:#c6f5bf"></div>
<div class="t" style="left:1256.50px;top:464.40px;font-size:30px;color:#1a9412;letter-spacing:0.050px;">Actif</div>
<div class="abs" style="left:1356px;top:451.79999999999995px;width:215.8px;height:55.7px;border-radius:28px;background:#f1f2f4"></div>
<svg class="abs" style="left:1383px;top:468px" width="27" height="28" viewBox="0 0 27 28"><rect x="2" y="12" width="22" height="14" rx="3" fill="none" stroke="#1e293b" stroke-width="2.8"/><path d="M6.5 12V8.5a6.5 6.5 0 0 1 13 0V12" fill="none" stroke="#1e293b" stroke-width="2.8"/><path d="M13 17.5V20.5" stroke="#1e293b" stroke-width="2.8" stroke-linecap="round"/></svg>
<div class="t" style="left:1427.50px;top:464.40px;font-size:30px;color:#1e293b;letter-spacing:-0.411px;">Verrouillé</div>
<div class="t" style="left:1746.30px;top:464.31px;font-size:32px;color:#000;letter-spacing:0.900px;">50 000 F CFA</div>
<div class="abs" style="left:2118.3px;top:445px;width:69.4px;height:69.5px;border-radius:12px;background:#eff2f5"></div>
<div class="abs" style="left:2148.4px;top:465.0999999999999px;width:6.4px;height:6.4px;border-radius:50%;background:#000"></div>
<div class="abs" style="left:2148.4px;top:476.79999999999995px;width:6.4px;height:6.4px;border-radius:50%;background:#000"></div>
<div class="abs" style="left:2148.4px;top:488.5px;width:6.4px;height:6.4px;border-radius:50%;background:#000"></div>
<div class="abs" style="left:0;top:555px;width:2304px;height:152px;background:#ffffff"></div>
<div class="t" style="left:46.70px;top:595.41px;font-size:32px;color:#000;letter-spacing:0.970px;">Frais d'examen - 2024 - 2025</div>
<div class="t" style="left:47.00px;top:641.30px;font-size:28px;color:#7086a0;letter-spacing:0.254px;">Frais d'examen</div>
<div class="t" style="left:809.20px;top:616.51px;font-size:32px;color:#000;letter-spacing:1.860px;">2024 - 2025</div>
<div class="abs" style="left:1231.3px;top:603.8px;width:108.4px;height:55.7px;border-radius:28px;background:#c6f5bf"></div>
<div class="t" style="left:1256.50px;top:616.40px;font-size:30px;color:#1a9412;letter-spacing:0.050px;">Actif</div>
<div class="abs" style="left:1356px;top:603.8px;width:215.8px;height:55.7px;border-radius:28px;background:#f1f2f4"></div>
<svg class="abs" style="left:1383px;top:620px" width="27" height="28" viewBox="0 0 27 28"><rect x="2" y="12" width="22" height="14" rx="3" fill="none" stroke="#1e293b" stroke-width="2.8"/><path d="M6.5 12V8.5a6.5 6.5 0 0 1 13 0V12" fill="none" stroke="#1e293b" stroke-width="2.8"/><path d="M13 17.5V20.5" stroke="#1e293b" stroke-width="2.8" stroke-linecap="round"/></svg>
<div class="t" style="left:1427.50px;top:616.40px;font-size:30px;color:#1e293b;letter-spacing:-0.411px;">Verrouillé</div>
<div class="t" style="left:1745.20px;top:616.31px;font-size:32px;color:#000;letter-spacing:0.027px;">15 000 F CFA</div>
<div class="abs" style="left:2118.3px;top:597px;width:69.4px;height:69.5px;border-radius:12px;background:#eff2f5"></div>
<div class="abs" style="left:2148.4px;top:617.0999999999999px;width:6.4px;height:6.4px;border-radius:50%;background:#000"></div>
<div class="abs" style="left:2148.4px;top:628.8px;width:6.4px;height:6.4px;border-radius:50%;background:#000"></div>
<div class="abs" style="left:2148.4px;top:640.5px;width:6.4px;height:6.4px;border-radius:50%;background:#000"></div>
<div class="abs" style="left:0;top:707px;width:2304px;height:152px;background:#f8fbfd"></div>
<div class="t" style="left:46.70px;top:747.41px;font-size:32px;color:#000;letter-spacing:1.231px;">Frais d'inscription - 2024 - 2025</div>
<div class="t" style="left:47.00px;top:793.30px;font-size:28px;color:#7086a0;letter-spacing:0.800px;">Frais d'inscription</div>
<div class="t" style="left:809.20px;top:768.51px;font-size:32px;color:#000;letter-spacing:1.860px;">2024 - 2025</div>
<div class="abs" style="left:1231.3px;top:755.8px;width:108.4px;height:55.7px;border-radius:28px;background:#c6f5bf"></div>
<div class="t" style="left:1256.50px;top:768.40px;font-size:30px;color:#1a9412;letter-spacing:0.050px;">Actif</div>
<div class="abs" style="left:1356px;top:755.8px;width:215.8px;height:55.7px;border-radius:28px;background:#f1f2f4"></div>
<svg class="abs" style="left:1383px;top:772px" width="27" height="28" viewBox="0 0 27 28"><rect x="2" y="12" width="22" height="14" rx="3" fill="none" stroke="#1e293b" stroke-width="2.8"/><path d="M6.5 12V8.5a6.5 6.5 0 0 1 13 0V12" fill="none" stroke="#1e293b" stroke-width="2.8"/><path d="M13 17.5V20.5" stroke="#1e293b" stroke-width="2.8" stroke-linecap="round"/></svg>
<div class="t" style="left:1427.50px;top:768.40px;font-size:30px;color:#1e293b;letter-spacing:-0.411px;">Verrouillé</div>
<div class="t" style="left:1746.00px;top:768.31px;font-size:32px;color:#000;letter-spacing:0.655px;">25 000 F CFA</div>
<div class="abs" style="left:2118.3px;top:749px;width:69.4px;height:69.5px;border-radius:12px;background:#eff2f5"></div>
<div class="abs" style="left:2148.4px;top:769.0999999999999px;width:6.4px;height:6.4px;border-radius:50%;background:#000"></div>
<div class="abs" style="left:2148.4px;top:780.8px;width:6.4px;height:6.4px;border-radius:50%;background:#000"></div>
<div class="abs" style="left:2148.4px;top:792.5px;width:6.4px;height:6.4px;border-radius:50%;background:#000"></div>
<div class="abs" style="left:0;top:859px;width:2304px;height:152px;background:#ffffff"></div>
<div class="t" style="left:46.70px;top:899.41px;font-size:32px;color:#000;letter-spacing:1.145px;">Frais de scolarité - 2024 - 2025</div>
<div class="t" style="left:47.00px;top:945.30px;font-size:28px;color:#7086a0;letter-spacing:0.618px;">Frais de scolarité</div>
<div class="t" style="left:809.20px;top:920.51px;font-size:32px;color:#000;letter-spacing:1.860px;">2024 - 2025</div>
<div class="abs" style="left:1231.3px;top:907.8px;width:108.4px;height:55.7px;border-radius:28px;background:#c6f5bf"></div>
<div class="t" style="left:1256.50px;top:920.40px;font-size:30px;color:#1a9412;letter-spacing:0.050px;">Actif</div>
<div class="abs" style="left:1356px;top:907.8px;width:215.8px;height:55.7px;border-radius:28px;background:#f1f2f4"></div>
<svg class="abs" style="left:1383px;top:924px" width="27" height="28" viewBox="0 0 27 28"><rect x="2" y="12" width="22" height="14" rx="3" fill="none" stroke="#1e293b" stroke-width="2.8"/><path d="M6.5 12V8.5a6.5 6.5 0 0 1 13 0V12" fill="none" stroke="#1e293b" stroke-width="2.8"/><path d="M13 17.5V20.5" stroke="#1e293b" stroke-width="2.8" stroke-linecap="round"/></svg>
<div class="t" style="left:1427.50px;top:920.40px;font-size:30px;color:#1e293b;letter-spacing:-0.411px;">Verrouillé</div>
<div class="t" style="left:1745.20px;top:920.31px;font-size:32px;color:#000;letter-spacing:0.375px;">150 000 F CFA</div>
<div class="abs" style="left:2118.3px;top:901px;width:69.4px;height:69.5px;border-radius:12px;background:#eff2f5"></div>
<div class="abs" style="left:2148.4px;top:921.0999999999999px;width:6.4px;height:6.4px;border-radius:50%;background:#000"></div>
<div class="abs" style="left:2148.4px;top:932.8px;width:6.4px;height:6.4px;border-radius:50%;background:#000"></div>
<div class="abs" style="left:2148.4px;top:944.5px;width:6.4px;height:6.4px;border-radius:50%;background:#000"></div>
</div>
<svg class="abs" style="left:2364px;top:1549px" width="20" height="20" viewBox="0 0 20 20"><path d="M2 2L18 18M18 2L2 18" stroke="#000" stroke-width="3" stroke-linecap="round"/></svg>
<div class="abs" style="left:2232px;top:1632px;width:120px;height:120px;border-radius:50%;background:#4ba736;box-shadow:0 4px 10px rgba(0,0,0,.12)"></div>
<svg class="abs" style="left:2260px;top:1658px" width="64" height="70" viewBox="0 0 64 70">
<circle cx="32" cy="32" r="28" fill="#fff"/>
<path d="M16 52 L21.6 65.5 L42 58.5 Z" fill="#fff"/>
<path d="M29.5 44 H49 C47 49 43 51.5 39 51.5 C35 51.5 31.5 49 29.5 44Z" fill="#4ba736"/>
</svg>
<div class="abs" style="left:2312px;top:1632px;width:40px;height:40px;border-radius:50%;background:#c01515"></div>
<div class="t" style="left:2325.60px;top:1641.38px;font-size:22px;color:#fff;font-weight:700;letter-spacing:0.000px;">1</div>
<svg class="abs" style="left:2150px;top:1540px" width="250" height="200" viewBox="2150 1540 250 200">
<defs><path id="arc" d="M 2204 1704 A 95 95 0 0 1 2394 1704"/></defs>
<g font-family="Liberation Sans" font-weight="700" font-size="40" letter-spacing="-2.2">
<text fill="#2a9db2" stroke="#2a9db2" stroke-width="5" stroke-linejoin="round" transform="translate(-1.5,2.5)"><textPath href="#arc" startOffset="128" text-anchor="middle">We Are Here!</textPath></text>
<text fill="#fff" stroke="#2a9db2" stroke-width="4" stroke-linejoin="round" paint-order="stroke"><textPath href="#arc" startOffset="128" text-anchor="middle">We Are Here!</textPath></text>
</g></svg>
<svg class="abs" style="left:2145px;top:1685px" width="80" height="60" viewBox="0 0 80 60">
<path d="M28 9 C31 7 35 9 48 16 L52 20 C51 15 52 10.5 55 10.5 C58 10.5 60 14 62 20 L67 34 C69 40 68 44 64 47 L42 47 C38 44 28 38 22 33 C18.5 30 19.5 27.5 22 27 C18.5 24.5 18.5 20.5 21.5 20 C18.5 17 19.5 13 23.5 13.5 L27 15 C25 12.5 25.5 10 28 9 Z" fill="#fcd21f"/>
<path d="M7.5 36 Q10 44 15.5 46.5 M13.5 32.5 Q16 41 24.5 43.5" fill="none" stroke="#fcd21f" stroke-width="1.8" stroke-linecap="round"/>
</svg>
</div>
<script>(function(){var w=window.innerWidth;if(w&&Math.abs(w-2400)>2){var k=w/2400,r=document.getElementById('root');r.style.transformOrigin='0 0';r.style.transform='scale('+k+')';document.body.style.width=w+'px';document.body.style.height=(1792*k)+'px';}})();</script>
</body></html>
